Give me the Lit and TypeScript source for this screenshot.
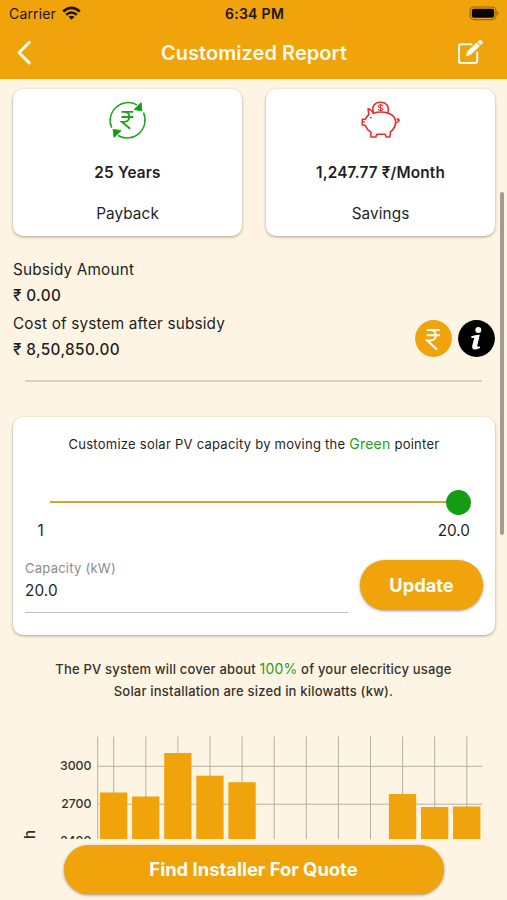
import { LitElement, html, css, svg } from "lit";
import { customElement } from "lit/decorators.js";

const BARS: Array<[number, number]> = [
  [0, 792.5], [1, 796.5], [2, 753], [3, 775.7], [4, 782.2],
  [9, 794], [10, 807], [11, 806.5],
];

@customElement("usage-chart")
class UsageChart extends LitElement {
  static styles = css`
    :host { display: block; height: 104px; }
    svg { display: block; }
    text { font-family: Inter, "Noto Sans", sans-serif; fill: #35322b; }
    .tick { font-size: 12.3px; letter-spacing: 0; font-weight: 500; }
    .unit { font-size: 15px; font-weight: 500; }
    .grid { stroke: #b5afa4; stroke-width: 1; }
    .bar { fill: #f0a30a; }
  `;
  render() {
    const top = 735;
    const step = 32.1;
    return html`<svg width="507" height="104" viewBox="0 0 507 104">
      <g class="grid">
        <line x1="97.7" x2="97.7" y1="1.5" y2="104"></line>
        ${Array.from({ length: 12 }, (_, i) => svg`<line x1=${113.7 + i * step} x2=${113.7 + i * step} y1="1.5" y2="104"></line>`)}
        <line x1="97.7" x2="482.5" y1="31.3" y2="31.3"></line>
        <line x1="97.7" x2="482.5" y1="69.2" y2="69.2"></line>
      </g>
      ${BARS.map(([i, y]) => svg`<rect class="bar" x=${100 + i * step} y=${y - top} width="27.3" height="110"></rect>`)}
      <text class="tick" x="91.5" y="34.7" text-anchor="end">3000</text>
      <text class="tick" x="91.5" y="72.7" text-anchor="end">2700</text>
      <text class="tick" x="91.5" y="110" text-anchor="end">2400</text>
      <text class="unit" transform="translate(35 95) rotate(-90)" text-anchor="end">kWh</text>
    </svg>`;
  }
}

@customElement("app-root")
class AppRoot extends LitElement {
  static styles = css`
    :host {
      display: flex; flex-direction: column; height: 900px; width: 507px; overflow: hidden;
      background: #fef4e4; color: #1f1f1f; font-family: Inter, "Noto Sans", sans-serif;
      font-size: 15.3px; position: relative;
    }
    * { box-sizing: border-box; }
    svg { display: block; flex: none; }
    header { background: #f0a30a; height: 79px; flex: none; }
    .status { height: 27px; display: grid; grid-template-columns: 1fr auto 1fr; align-items: center; padding: 0 7px 0 9px; color: #1d1503; }
    .carrier { display: flex; align-items: center; gap: 6px; font-size: 14px; line-height: 26px; letter-spacing: 0.15px; }
    .time { font-size: 14px; font-weight: 600; letter-spacing: 0.3px; }
    .battery { justify-self: end; }
    .nav { height: 52px; display: grid; grid-template-columns: 60px 1fr 60px; align-items: center; color: #fffaf0; }
    .title { text-align: center; font-size: 20px; font-weight: 600; line-height: 52px; letter-spacing: 0.05px; padding-left: 1px; }
    .back { margin-left: 15px; }
    .edit { margin-left: 10px; }
    main { height: 760px; flex: none; overflow: hidden; display: flex; flex-direction: column; padding-top: 10px; }
    .card { background: #fff; border-radius: 10px; box-shadow: 0 1px 3px rgba(60, 45, 20, 0.42); }
    .pair { display: grid; grid-template-columns: 229px 229px; gap: 24px; padding-left: 13px; }
    .stat { height: 147px; display: flex; flex-direction: column; align-items: center; padding-top: 11px; }
    .value { margin-top: 21px; line-height: 24px; font-weight: 600; letter-spacing: 0.18px; }
    .label { margin-top: 17px; line-height: 24px; letter-spacing: 0.1px; }
    .costs { display: flex; justify-content: space-between; align-items: flex-end; padding: 22px 12px 0 13px; height: 126px; }
    .lines { display: flex; flex-direction: column; align-self: flex-start; }
    .line { line-height: 24px; letter-spacing: 0.18px; }
    .line.amount { font-weight: 500; margin: 2px 0 4px; line-height: 24px; letter-spacing: 0.38px; }
    .badges { display: flex; gap: 6px; margin-bottom: 5px; }
    .divider { height: 2px; background: #d9d1c5; margin: 18px 25px 0 25px; flex: none; }
    .adjust { height: 218px; flex: none; margin: 35px 12px 0 13px; padding-top: 15px; }
    .hint { text-align: center; font-size: 13px; line-height: 24px; letter-spacing: 0.25px; white-space: nowrap; }
    .green { color: #1e9e1c; font-size: 14px; }
    .slider { display: flex; align-items: center; height: 26px; margin: 33px 24px 0 37px; }
    .track { flex: 1; height: 2.5px; background: #e0a126; }
    .thumb { width: 25px; height: 25px; border-radius: 50%; background: #149c12; }
    .ends { display: flex; justify-content: space-between; margin: 4px 25px 0 24.5px; line-height: 24px; }
    .form { display: flex; justify-content: space-between; margin: 17px 12px 0 12px; }
    .field { width: 323px; height: 53px; border-bottom: 1px solid #bfbfbf; }
    .caption { font-size: 13px; color: #8b8b8b; line-height: 18px; letter-spacing: 0.25px; margin-top: -1px; }
    .input { line-height: 24px; margin-top: 2px; letter-spacing: 0.1px; }
    .button { background: #f0a30a; color: #fffdf5; font-weight: 700; border-radius: 26px; display: grid; place-items: center; box-shadow: 0 1px 3px rgba(60, 40, 10, 0.5); }
    .update { width: 123px; height: 50px; font-size: 18.3px; }
    .note { text-align: center; font-size: 13px; line-height: 22px; letter-spacing: 0.19px; font-weight: 500; margin-top: 23px; color: #35322b; }
    .note .green { font-weight: 400; }
    usage-chart { margin-top: auto; }
    footer { height: 61px; flex: none; display: flex; justify-content: center; padding-top: 6px; }
    .quote { width: 380px; height: 49px; font-size: 18.4px; padding-bottom: 1px; }
    .scrollbar { position: absolute; left: 500px; top: 192px; width: 4px; height: 343px; border-radius: 2px; background: #a39c91; }
  `;
  render() {
    return html`
      <header>
        <div class="status">
          <div class="carrier"><span>Carrier</span>
            <svg width="19" height="15" viewBox="0 0 19 15" fill="none" stroke="#1d1503" stroke-width="2.6">
              <path d="M1.2 5.4Q9.5 -1.8 17.8 5.4"></path>
              <path d="M4.2 8.7Q9.5 4.3 14.8 8.7"></path>
              <path d="M9.5 13.8L6.5 10.8Q9.5 8.6 12.5 10.8Z" fill="#1d1503" stroke="none"></path>
            </svg>
          </div>
          <div class="time">6:34 PM</div>
          <svg class="battery" width="31" height="15" viewBox="0 0 31 15">
            <rect x="1" y="1" width="26" height="12.6" rx="4" fill="none" stroke="#98690c" stroke-width="1.2"></rect>
            <rect x="2.8" y="2.8" width="22.4" height="9" rx="2" fill="#080500"></rect>
            <path d="M28.3 5Q30.8 7.3 28.3 9.6Z" fill="#98690c"></path>
          </svg>
        </div>
        <div class="nav">
          <svg class="back" width="18" height="26" viewBox="0 0 18 26" fill="none" stroke="#fffaf0" stroke-width="3" stroke-linecap="round" stroke-linejoin="round"><path d="M14.3 2.3L4 12.7L14.3 22.9"></path></svg>
          <div class="title">Customized Report</div>
          <svg class="edit" width="28" height="28" viewBox="0 0 28 28">
            <path d="M14.5 5.2H4.2Q2 5.2 2 7.5V21.7Q2 24 4.2 24H17.9Q20.2 24 20.2 21.7V13.5" fill="none" stroke="#fffaf0" stroke-width="2.1" stroke-linecap="round"></path>
            <path d="M9.4 16.9L10.8 12.4L19.6 4L22.5 6.9L13.7 15.4ZM20.8 2.9L22 1.7Q23.4 .7 24.8 2Q26 3.3 24.9 4.6L23.7 5.8Z" fill="#fffaf0" stroke="#fffaf0" stroke-width=".9" stroke-linejoin="round"></path>
          </svg>
        </div>
      </header>
      <main>
        <section class="pair">
          <div class="card stat">
            <svg width="40" height="40" viewBox="0.5 0 40 40" fill="none" stroke="#25a023" stroke-width="1.5">
              <path d="M4.2 27.8A18 18 0 0 1 29.5 4.9M36 12.6A18 18 0 0 1 10.5 35.5"></path>
              <path d="M33.6 2.6L34.4 10.8L26.6 9.6Z M5.6 29.4L13.6 30.6L6.6 37.4Z" fill="#149c12" stroke="#149c12" stroke-width=".9" stroke-linejoin="round"></path>
              <path d="M14 11.8H25.8M14 17H25.8M14 11.8H17C23.4 11.8 23.4 21.8 17 21.8H14.3L22.7 28.8" stroke-width="1.8"></path>
            </svg>
            <div class="value">25 Years</div>
            <div class="label">Payback</div>
          </div>
          <div class="card stat">
            <svg width="40" height="40" viewBox="0.5 0 40 40" fill="none" stroke="#ef2b2b" stroke-width="1.6" stroke-linejoin="round" stroke-linecap="round">
              <path d="M13 13.2C11.5 10.5 9.3 9.1 7.5 8.7L8.3 14.5C6.4 16 5.6 18 4.8 19.3H1.8V24.7L5 25.8C6.2 29.2 8.3 31 10.4 32.2V37H15.4L16.3 34.3H24.7L25.7 37H29.3L30 31.9C34.3 28.4 35.6 24.8 35 20.5C34.3 16.6 31.5 14.4 28 13.2Q20.5 10.8 13 13.2"></path>
              <path d="M13 13C10.8 6.1 14.3 2.2 20.1 2.2S29.3 6.9 27.2 13"></path>
              <path d="M22.4 5.7C20.8 4.2 18 4.6 18 6.5S22.5 7.5 22.5 9.1S19.4 10.9 17.8 9.6M20.2 4.2V10.6" stroke-width="1.1"></path>
              <path d="M2.4 21.8H4M35.2 22.5C38.5 23 39.4 19.8 37.8 18.8C36.4 18.2 36 20.3 38.8 20.7" stroke-width="1.2"></path>
              <circle cx="10.5" cy="17.6" r=".9" fill="#ef2b2b" stroke="none"></circle>
            </svg>
            <div class="value">1,247.77 ₹/Month</div>
            <div class="label">Savings</div>
          </div>
        </section>
        <section class="costs">
          <div class="lines">
            <div class="line">Subsidy Amount</div>
            <div class="line amount">₹ 0.00</div>
            <div class="line">Cost of system after subsidy</div>
            <div class="line amount">₹ 8,50,850.00</div>
          </div>
          <div class="badges">
            <svg width="37" height="37" viewBox="0 0 37 37"><circle cx="18.5" cy="18.5" r="18.4" fill="#f0a30a"></circle>
              <path d="M11.6 10H25M11.6 15.3H25M11.6 10H15.2C22.7 10 22.7 20.5 15.2 20.5H12.2L22 29.5" fill="none" stroke="#fffaf0" stroke-width="2.1"></path></svg>
            <svg width="37" height="37" viewBox="0 0 37 37"><circle cx="18.5" cy="18.5" r="18.4" fill="#000"></circle>
              <circle cx="20.3" cy="10" r="3" fill="#fff"></circle>
              <path d="M13.4 16.3Q17 14.7 21.8 14.8L19.3 25.2Q18.9 27.4 22 26.6V28.1Q18.3 30.2 15.3 29.3Q13.7 28.5 14.2 26L16.2 18H13.2Z" fill="#fff"></path></svg>
          </div>
        </section>
        <div class="divider"></div>
        <section class="card adjust">
          <div class="hint">Customize solar PV capacity by moving the <span class="green">Green</span> pointer</div>
          <div class="slider"><div class="track"></div><div class="thumb"></div></div>
          <div class="ends"><span>1</span><span>20.0</span></div>
          <div class="form">
            <div class="field"><div class="caption">Capacity (kW)</div><div class="input">20.0</div></div>
            <div class="button update">Update</div>
          </div>
        </section>
        <div class="note">The PV system will cover about <span class="green">100%</span> of your elecriticy usage<br>Solar installation are sized in kilowatts (kw).</div>
        <usage-chart></usage-chart>
      </main>
      <footer><div class="button quote">Find Installer For Quote</div></footer>
      <div class="scrollbar"></div>
    `;
  }
}
